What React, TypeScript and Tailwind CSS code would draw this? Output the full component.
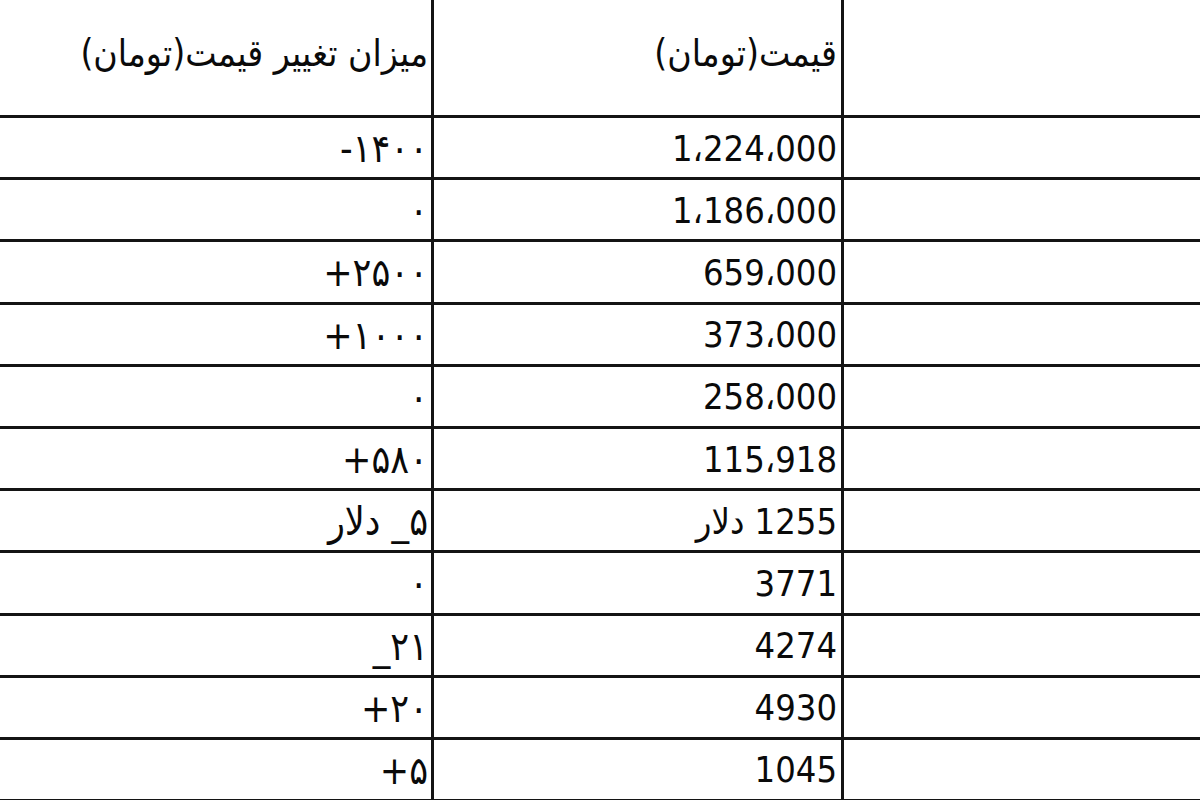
import React from "react";

const rows: { change: string; changeDir: "ltr" | "rtl"; price: string; priceDir: "ltr" | "rtl" }[] = [
  { change: "-۱۴۰۰", changeDir: "ltr", price: "1،224،000", priceDir: "ltr" },
  { change: "۰", changeDir: "ltr", price: "1،186،000", priceDir: "ltr" },
  { change: "+۲۵۰۰", changeDir: "ltr", price: "659،000", priceDir: "ltr" },
  { change: "+۱۰۰۰", changeDir: "ltr", price: "373،000", priceDir: "ltr" },
  { change: "۰", changeDir: "ltr", price: "258،000", priceDir: "ltr" },
  { change: "+۵۸۰", changeDir: "ltr", price: "115،918", priceDir: "ltr" },
  { change: "۵_ دلار", changeDir: "rtl", price: "1255 دلار", priceDir: "rtl" },
  { change: "۰", changeDir: "ltr", price: "3771", priceDir: "ltr" },
  { change: "_۲۱", changeDir: "ltr", price: "4274", priceDir: "ltr" },
  { change: "+۲۰", changeDir: "ltr", price: "4930", priceDir: "ltr" },
  { change: "+۵", changeDir: "ltr", price: "1045", priceDir: "ltr" },
];

export default function App() {
  return (
    <div
      className="w-[1200px] h-[800px] overflow-hidden bg-white text-[#0a0a0a]"
      style={{ fontFamily: '"DejaVu Sans Condensed", "DejaVu Sans", sans-serif' }}
    >
      <div className="flex h-[118px] border-b-[3px] border-[#141414]">
        <div className="w-[434px] shrink-0 border-r-[3px] border-[#141414] flex items-center justify-end pr-[3px] pb-[8px]">
          <span dir="rtl" className="text-[37px] leading-none">میزان تغییر قیمت(تومان)</span>
        </div>
        <div className="w-[410px] shrink-0 border-r-[3px] border-[#141414] flex items-center justify-end pr-[4px] pb-[8px]">
          <span dir="rtl" className="text-[37px] leading-none">قیمت(تومان)</span>
        </div>
        <div className="flex-1" />
      </div>
      {rows.map((r, i) => (
        <div key={i} className="flex h-[62.2px] border-b-[3px] border-[#141414]">
          <div className="w-[434px] shrink-0 border-r-[3px] border-[#141414] flex items-center justify-end pr-[3px] pt-[2px]">
            <span dir={r.changeDir} className="text-[39px] leading-none">{r.change}</span>
          </div>
          <div className="w-[410px] shrink-0 border-r-[3px] border-[#141414] flex items-center justify-end pr-[4px] pt-[2px]">
            <span dir={r.priceDir} className="text-[36px] leading-none">{r.price}</span>
          </div>
          <div className="flex-1" />
        </div>
      ))}
    </div>
  );
}
